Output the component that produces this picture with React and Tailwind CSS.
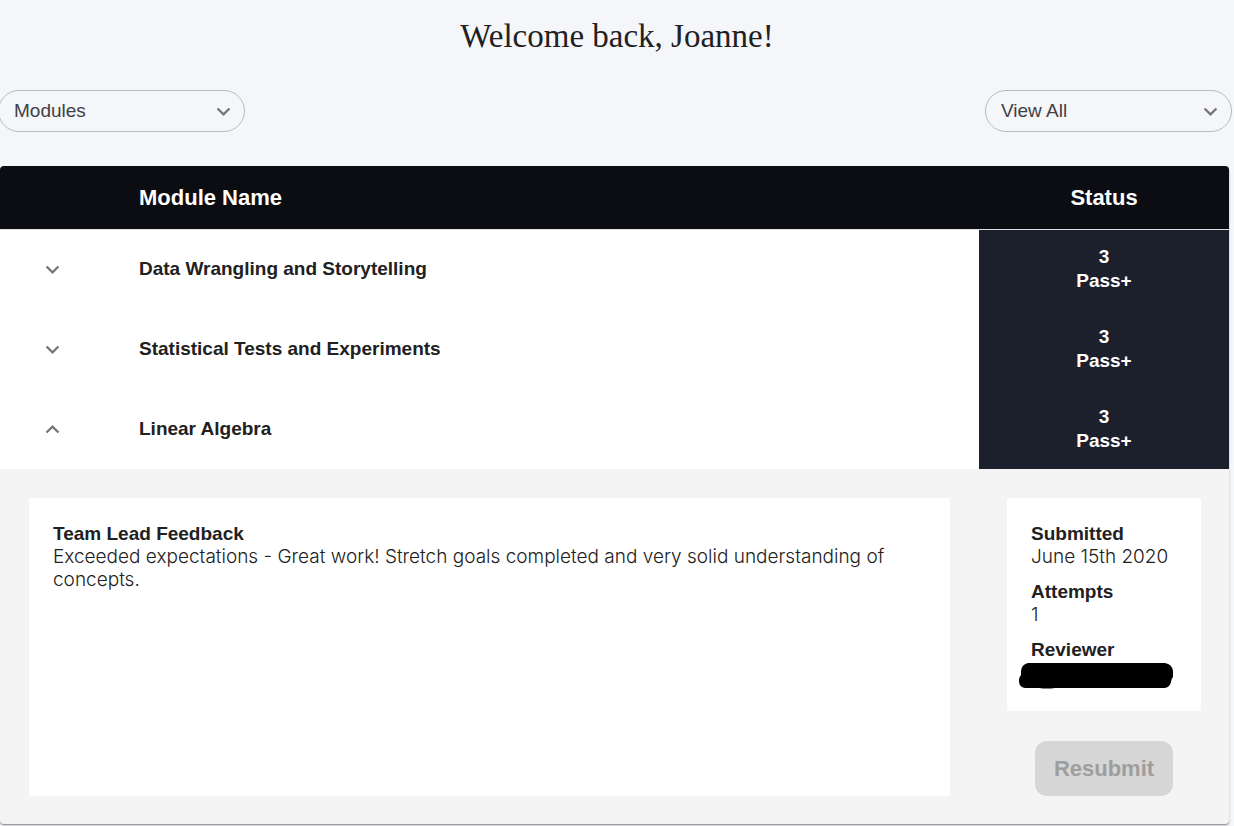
import { useState } from "react";

const MODULES = [
  { id: "wrangling", name: "Data Wrangling and Storytelling", score: 3, grade: "Pass+" },
  { id: "stats", name: "Statistical Tests and Experiments", score: 3, grade: "Pass+" },
  {
    id: "algebra",
    name: "Linear Algebra",
    score: 3,
    grade: "Pass+",
    feedback:
      "Exceeded expectations - Great work! Stretch goals completed and very solid understanding of concepts.",
    submitted: "June 15th 2020",
    attempts: 1,
  },
];

function Chevron({ up = false, className = "" }) {
  return (
    <svg viewBox="0 0 24 24" aria-hidden="true" className={`size-[27px] fill-[#757575] ${className}`}>
      {up ? (
        <path d="M12 8l-6 6 1.41 1.41L12 10.83l4.59 4.58L18 14z" />
      ) : (
        <path d="M16.59 8.59L12 13.17 7.41 8.59 6 10l6 6 6-6z" />
      )}
    </svg>
  );
}

function Picker({ label, options }) {
  return (
    <div className="relative w-[247px]">
      <select
        aria-label={label}
        className="block h-[42px] w-full appearance-none rounded-full border border-[#b9bbc0] bg-transparent pr-10 pl-[15px] text-[19px] text-[#3f4145]"
      >
        {options.map((option) => (
          <option key={option}>{option}</option>
        ))}
      </select>
      <Chevron className="pointer-events-none absolute top-2 right-2" />
    </div>
  );
}

function Redacted() {
  return (
    <svg viewBox="0 0 154 26" aria-hidden="true" className="-ml-3 block h-[26px] w-[154px] fill-black">
      <path d="M9 0H146Q153 1 154 8V14Q152 16 152 19Q151 24 146 25H36Q28 26 20 25H6Q0 24 0 18Q0 14 2 12V8Q3 1 9 0Z" />
    </svg>
  );
}

function Details({ item }) {
  return (
    <div className="flex">
      <div className="flex flex-1 px-[29px] pt-[29px] pb-7">
        <section className="min-h-[298px] flex-1 rounded-xs bg-white p-6 text-[19px] leading-[23px]">
          <h2 className="font-bold">Team Lead Feedback</h2>
          <p className="font-['Inter',sans-serif] font-light">{item.feedback}</p>
        </section>
      </div>
      <div className="flex w-[250px] flex-col justify-between px-7 pt-[29px] pb-7">
        <dl className="rounded-xs bg-white p-6 pb-[22px] text-[19px] leading-[23px]">
          <dt className="font-bold">Submitted</dt>
          <dd className="mb-3 font-['Inter',sans-serif] font-light whitespace-nowrap">{item.submitted}</dd>
          <dt className="font-bold">Attempts</dt>
          <dd className="mb-3 font-['Inter',sans-serif] font-light">{item.attempts}</dd>
          <dt className="font-bold">Reviewer</dt>
          <dd className="pt-0.5">
            <Redacted />
          </dd>
        </dl>
        <button
          type="button"
          disabled
          className="h-[55px] w-[138px] self-center rounded-xl bg-[#d6d6d6] text-[22px] font-bold text-[#9e9e9e]"
        >
          Resubmit
        </button>
      </div>
    </div>
  );
}

function ModuleRows({ item, open, onToggle }) {
  return (
    <>
      <tr className="h-20 bg-white">
        <td className="p-0">
          <button
            type="button"
            aria-expanded={open}
            aria-label={`Toggle ${item.name}`}
            onClick={onToggle}
            className="mx-auto block"
          >
            <Chevron up={open} />
          </button>
        </td>
        <th scope="row" className="p-0 pl-[34px] text-left text-[19px] font-bold">
          {item.name}
        </th>
        <td className="bg-[#1b202c] p-0 text-center text-[19px] leading-6 font-bold text-white">
          {item.score}
          <br />
          {item.grade}
        </td>
      </tr>
      {open && item.feedback && (
        <tr>
          <td colSpan={3} className="p-0">
            <Details item={item} />
          </td>
        </tr>
      )}
    </>
  );
}

export default function App() {
  const [openId, setOpenId] = useState("algebra");
  return (
    <main className="min-h-screen overflow-hidden bg-[#f5f6fa] pt-4 font-['Liberation_Sans',sans-serif] text-[#212121]">
      <h1 className="text-center font-['Liberation_Serif',serif] text-[33px] leading-10">Welcome back, Joanne!</h1>
      <div className="mt-[34px] mr-0.5 -ml-0.5 flex justify-between">
        <Picker label="Group by" options={["Modules", "Sprints"]} />
        <Picker label="Filter" options={["View All", "Completed"]} />
      </div>
      <div className="mt-[34px] mr-[5px] overflow-hidden rounded-sm bg-[#f4f4f4] shadow-[0_1px_1px_rgba(0,0,0,0.3),0_2px_3px_rgba(0,0,0,0.15)]">
        <table className="w-full table-fixed border-collapse">
          <colgroup>
            <col className="w-[105px]" />
            <col />
            <col className="w-[250px]" />
          </colgroup>
          <thead>
            <tr className="h-[63px] border-b border-[#e0e0e0] bg-[#0c0d12] text-[22px] text-white">
              <td />
              <th scope="col" className="p-0 pl-[34px] text-left font-bold">
                Module Name
              </th>
              <th scope="col" className="p-0 text-center font-bold">
                Status
              </th>
            </tr>
          </thead>
          <tbody>
            {MODULES.map((item) => (
              <ModuleRows
                key={item.id}
                item={item}
                open={openId === item.id}
                onToggle={() => setOpenId(openId === item.id ? null : item.id)}
              />
            ))}
          </tbody>
        </table>
      </div>
    </main>
  );
}
